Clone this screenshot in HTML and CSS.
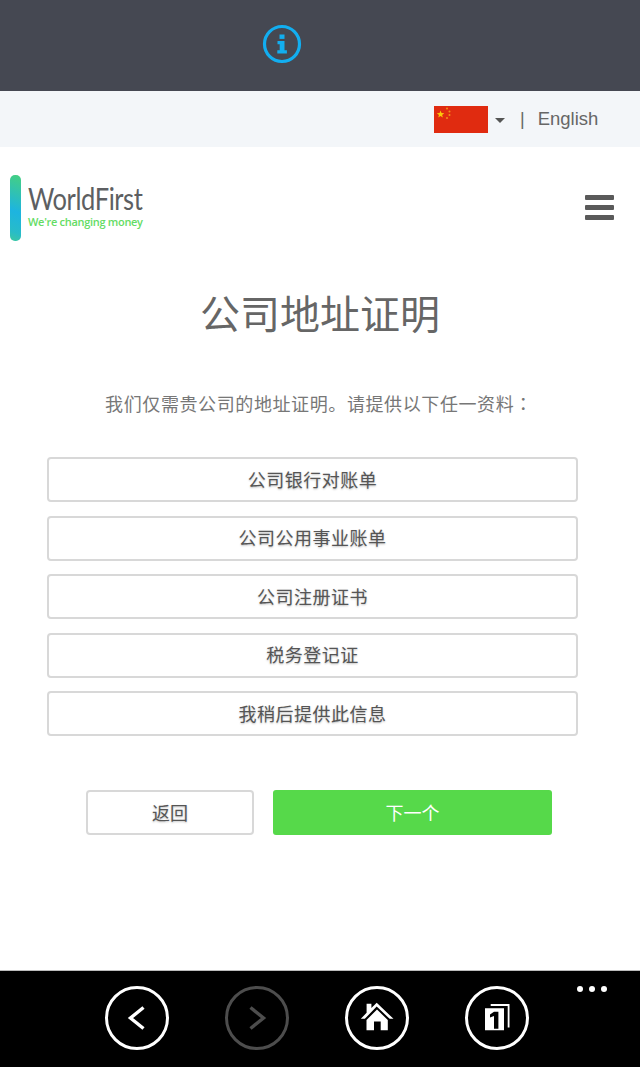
FILE: index.html
```html
<!DOCTYPE html>
<html lang="zh">
<head>
<meta charset="utf-8">
<title>公司地址证明</title>
<link rel="stylesheet" href="styles.css">
</head>
<body>
<div class="page">
  <div class="topbar">
    <svg class="info" width="40" height="40" viewBox="0 0 40 40">
      <circle cx="20" cy="20" r="17.5" fill="none" stroke="#12aef0" stroke-width="3.2"/>
      <rect x="17.5" y="10.5" width="5" height="4.4" fill="#12aef0"/>
      <path d="M15.5 17h7v9.2h2.4v3.2h-9.600v-3.200h2.400v-6h-2.200z" fill="#12aef0"/>
    </svg>
  </div>
  <div class="langbar">
    <svg class="flag" width="54" height="27" viewBox="0 0 54 27">
      <rect width="54" height="27" fill="#e02b10"/>
      <path d="M6.500 4.500l1 2.600 2.800.1-2.200 1.700.8 2.700-2.400-1.600-2.300 1.600.8-2.700-2.200-1.700 2.800-.1z" fill="#fbc80a"/>
      <circle cx="13" cy="2.500" r="1" fill="#f0901a"/>
      <circle cx="15.500" cy="5.500" r="1" fill="#f0901a"/>
      <circle cx="15.500" cy="9" r="1" fill="#f0901a"/>
      <circle cx="13" cy="12" r="1" fill="#f0901a"/>
    </svg>
    <span class="caret"></span>
    <span class="sep">|</span>
    <span class="lang">English</span>
  </div>
  <header class="header">
    <div class="logo">
      <span class="logo-bar"></span>
      <div class="logo-text">
        <span class="logo-name">WorldFirst</span>
        <span class="logo-tag">We're changing money</span>
      </div>
    </div>
    <div class="burger"><span></span><span></span><span></span></div>
  </header>
  <main class="main">
    <h1 class="title">公司地址证明</h1>
    <p class="subtitle">我们仅需贵公司的地址证明。请提供以下任一资料<span class="colon" lang="ja">：</span></p>
    <div class="options">
      <button class="option">公司银行对账单</button>
      <button class="option">公司公用事业账单</button>
      <button class="option">公司注册证书</button>
      <button class="option">税务登记证</button>
      <button class="option">我稍后提供此信息</button>
    </div>
    <div class="actions">
      <button class="btn-back">返回</button>
      <button class="btn-next">下一个</button>
    </div>
  </main>
  <nav class="navbar">
    <span class="nav-btn">
      <svg width="66" height="66" viewBox="0 0 66 66"><circle cx="33" cy="33" r="30.500" fill="none" stroke="#fff" stroke-width="3"/><path d="M39.500 22.500L26.500 33 39.500 43.500" fill="none" stroke="#fff" stroke-width="3.400"/></svg>
    </span>
    <span class="nav-btn">
      <svg width="66" height="66" viewBox="0 0 66 66"><circle cx="33" cy="33" r="30.500" fill="none" stroke="#4d4d4d" stroke-width="3"/><path d="M26.500 22.500L39.500 33 26.500 43.500" fill="none" stroke="#4d4d4d" stroke-width="3.400"/></svg>
    </span>
    <span class="nav-btn">
      <svg width="66" height="66" viewBox="0 0 66 66"><circle cx="33" cy="33" r="30.500" fill="none" stroke="#fff" stroke-width="3"/><path d="M32.700 17.800L49.500 33.800h-3.900L32.700 21.600 20.800 33.800h-4l5.800-6V18.800h4.800v4.200z" fill="#fff"/><path d="M33 24.500L43.800 35v10.300H36.700V36.600H30v8.700H22.500V35z" fill="#fff"/></svg>
    </span>
    <span class="nav-btn">
      <svg width="66" height="66" viewBox="0 0 66 66"><circle cx="33" cy="33" r="30.500" fill="none" stroke="#fff" stroke-width="3"/><path d="M26.700 20h17.900v22.500" fill="none" stroke="#fff" stroke-width="1.800"/><path fill-rule="evenodd" d="M21 23.300h19v22H21zM30 26.700h4.400v17h-4.400V31l-4 1.500v-3z" fill="#fff"/></svg>
    </span>
    <span class="dots"><i></i><i></i><i></i></span>
  </nav>
</div>
</body>
</html>
```
FILE: styles.css
```css
* { box-sizing: border-box; }
html, body { margin: 0; padding: 0; background: #fff; }
body { font-family: "Liberation Sans", "Noto Sans CJK SC", sans-serif; color: #555; }
.page { width: 640px; height: 1067px; display: flex; flex-direction: column; overflow: hidden; }

.topbar { height: 91px; flex: none; background: #454852; display: flex; align-items: center; padding: 0 0 3px 262px; }
.info { display: block; }

.langbar { height: 56px; flex: none; background: #f3f6f9; display: flex; align-items: center; padding-left: 434px; }
.flag { display: block; margin-top: 1px; }
.caret { width: 0; height: 0; border-left: 5px solid transparent; border-right: 5px solid transparent; border-top: 5px solid #555; margin: 2px 0 0 7px; }
.sep { margin-left: 15px; font-size: 18px; color: #666; }
.lang { margin-left: 13px; font-size: 18.500px; color: #666; margin-top: 0; }

.header { height: 121px; flex: none; display: flex; justify-content: space-between; align-items: flex-start; padding: 28px 26px 0 10px; }
.logo { display: flex; align-items: flex-start; gap: 7px; }
.logo-bar { width: 11px; height: 66px; border-radius: 5px; background: linear-gradient(200deg, #45d080, #1db4e0 55%, #28bcc8 85%, #3cc8a0); }
.logo-text { display: flex; flex-direction: column; padding-top: 6px; }
.logo-name { font-family: Lato, sans-serif; font-size: 30px; line-height: 34px; letter-spacing: -.500px; color: #5d5f62; white-space: nowrap; transform: scaleX(.85); transform-origin: left center; }
.logo-tag { font-family: "Open Sans", sans-serif; font-size: 11px; line-height: 13px; letter-spacing: -.300px; color: #64dc64; font-weight: 600; white-space: nowrap; }
.burger { width: 29px; display: flex; flex-direction: column; gap: 5px; margin-top: 20px; }
.burger span { display: block; height: 5px; background: #5a5a5a; border-radius: 1px; }

.main { flex: 1; display: flex; flex-direction: column; }
.title { margin: 22px 0 0; text-align: center; font-size: 40px; line-height: 50px; font-weight: 400; color: #666; }
.subtitle { margin: 51px 0 0; text-align: center; font-size: 18px; line-height: 24px; letter-spacing: .600px; color: #777; padding-right: 2px; }
.colon { font-family: "Noto Sans CJK JP", sans-serif; }
.options { display: flex; flex-direction: column; gap: 13.600px; margin: 40px 62px 0 47px; }
.option { height: 45px; padding: 0 0 2px; background: #fff; border: 2px solid #d8d8d8; border-radius: 4px; font: inherit; font-size: 18px; letter-spacing: .500px; color: #555; text-shadow: 0 1px 2px rgba(0,0,0,.25); }
.actions { display: flex; gap: 19px; margin: 54px 0 0 86px; }
.btn-back { width: 168px; height: 45px; padding: 0 0 2px; background: #fff; border: 2px solid #d8d8d8; border-radius: 4px; font: inherit; font-size: 18px; color: #555; text-shadow: 0 1px 2px rgba(0,0,0,.25); }
.btn-next { width: 279px; height: 45px; padding: 0 0 2px; background: #56d94a; border: 0; border-radius: 3px; font: inherit; font-size: 18px; color: #fff; }

.navbar { height: 97px; flex: none; background: #000; border-top: 1px solid #bbb; position: relative; display: flex; gap: 54px; padding: 14px 0 0 104px; }
.nav-btn { display: block; width: 66px; height: 66px; }
.nav-btn svg { display: block; }
.dots { position: absolute; left: 577px; top: 15px; display: flex; gap: 6px; }
.dots i { display: block; width: 6px; height: 6px; border-radius: 50%; background: #fff; }
```
